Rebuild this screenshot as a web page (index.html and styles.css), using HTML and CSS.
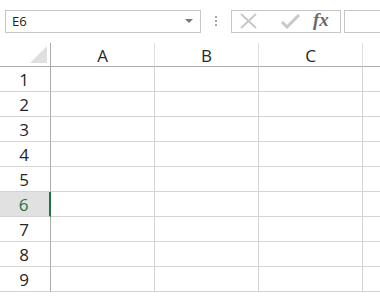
FILE: index.html
```html
<!DOCTYPE html>
<html>
<head>
    <title>Sheet</title>
    <meta charset="UTF-8">
    <link rel="stylesheet" href="styles.css">
</head>
<body>
    <div class="formula-bar">
        <div class="name-box">
            <span class="name-text">E6</span>
            <span class="dropdown"></span>
        </div>
        <div class="grip">
            <span></span><span></span><span></span>
        </div>
        <div class="fx-buttons">
            <svg class="icon-cancel" width="20" height="16" viewBox="0 0 20 16">
                <path d="M2 1 L17 15 M17 1 L2 15" stroke="#c8c8c8" stroke-width="2" fill="none"/>
            </svg>
            <svg class="icon-enter" width="20" height="16" viewBox="0 0 20 16">
                <path d="M1 9 L6 14 L18 2" stroke="#c8c8c8" stroke-width="3" fill="none"/>
            </svg>
            <span class="fx">fx</span>
        </div>
        <div class="formula-input"></div>
    </div>

    <div class="sheet">
        <div class="corner"><span class="corner-tri"></span></div>
        <div class="col-head">A</div>
        <div class="col-head">B</div>
        <div class="col-head">C</div>
        <div class="col-head last"></div>

        <div class="row-head">1</div><div class="cell"></div><div class="cell"></div><div class="cell"></div><div class="cell last"></div>
        <div class="row-head">2</div><div class="cell"></div><div class="cell"></div><div class="cell"></div><div class="cell last"></div>
        <div class="row-head">3</div><div class="cell"></div><div class="cell"></div><div class="cell"></div><div class="cell last"></div>
        <div class="row-head">4</div><div class="cell"></div><div class="cell"></div><div class="cell"></div><div class="cell last"></div>
        <div class="row-head">5</div><div class="cell"></div><div class="cell"></div><div class="cell"></div><div class="cell last"></div>
        <div class="row-head active">6</div><div class="cell"></div><div class="cell"></div><div class="cell"></div><div class="cell last"></div>
        <div class="row-head">7</div><div class="cell"></div><div class="cell"></div><div class="cell"></div><div class="cell last"></div>
        <div class="row-head">8</div><div class="cell"></div><div class="cell"></div><div class="cell"></div><div class="cell last"></div>
        <div class="row-head">9</div><div class="cell"></div><div class="cell"></div><div class="cell"></div><div class="cell last"></div>
    </div>
</body>
</html>
```

FILE: styles.css
```css
* {
    box-sizing: border-box;
}

body {
    margin: 0;
    width: 380px;
    height: 296px;
    overflow: hidden;
    background-color: #fff;
    font-family: "Open Sans", "Noto Sans", sans-serif;
    color: #262626;
}

.formula-bar {
    display: flex;
    align-items: center;
    padding: 10px 0 0 5px;
    height: 32px;
}

.name-box {
    display: flex;
    align-items: center;
    justify-content: space-between;
    width: 196px;
    height: 23px;
    border: 1px solid #c6c6c6;
    padding: 0 7px 0 6px;
}

.name-text {
    font-size: 13px;
    color: #222;
}

.dropdown {
    width: 0;
    height: 0;
    border-left: 4px solid transparent;
    border-right: 4px solid transparent;
    border-top: 4px solid #777;
}

.grip {
    display: flex;
    flex-direction: column;
    gap: 2px;
    width: 30px;
    align-items: center;
}

.grip span {
    width: 2px;
    height: 2px;
    background-color: #a6a6a6;
}

.fx-buttons {
    display: flex;
    align-items: center;
    width: 110px;
    height: 23px;
    border: 1px solid #c6c6c6;
    padding-left: 7px;
}

.icon-cancel {
    margin-right: 22px;
}

.fx {
    margin-left: 12px;
    font-family: "Liberation Serif", "DejaVu Serif", serif;
    font-style: italic;
    font-weight: bold;
    font-size: 19px;
    color: #6a6a6a;
    line-height: 1;
    margin-top: -3px;
}

.formula-input {
    flex: 1;
    height: 23px;
    margin-left: 3px;
    border: 1px solid #c6c6c6;
    border-right: none;
}

.sheet {
    display: grid;
    grid-template-columns: 51px 104px 104px 104px 1fr;
    grid-template-rows: 24px repeat(9, 25px);
    margin-top: 11px;
}

.corner {
    position: relative;
    border-right: 1px solid #ababab;
    border-bottom: 1px solid #ababab;
}

.corner-tri {
    position: absolute;
    right: 3px;
    bottom: 3px;
    width: 0;
    height: 0;
    border-left: 17px solid transparent;
    border-bottom: 17px solid #dfdfdf;
}

.col-head {
    display: flex;
    align-items: center;
    justify-content: center;
    font-size: 17px;
    border-right: 1px solid #e1e1e1;
    border-bottom: 1px solid #ababab;
    padding-top: 2px;
}

.row-head {
    display: flex;
    align-items: center;
    justify-content: center;
    font-size: 17px;
    border-right: 1px solid #ababab;
    border-bottom: 1px solid #d4d4d4;
    padding-right: 2px;
}

.row-head.active {
    background-color: #e1e1e1;
    color: #217346;
    border-right: 2px solid #217346;
}

.cell {
    border-right: 1px solid #d4d4d4;
    border-bottom: 1px solid #d4d4d4;
}

.last {
    border-right: none;
}
```
